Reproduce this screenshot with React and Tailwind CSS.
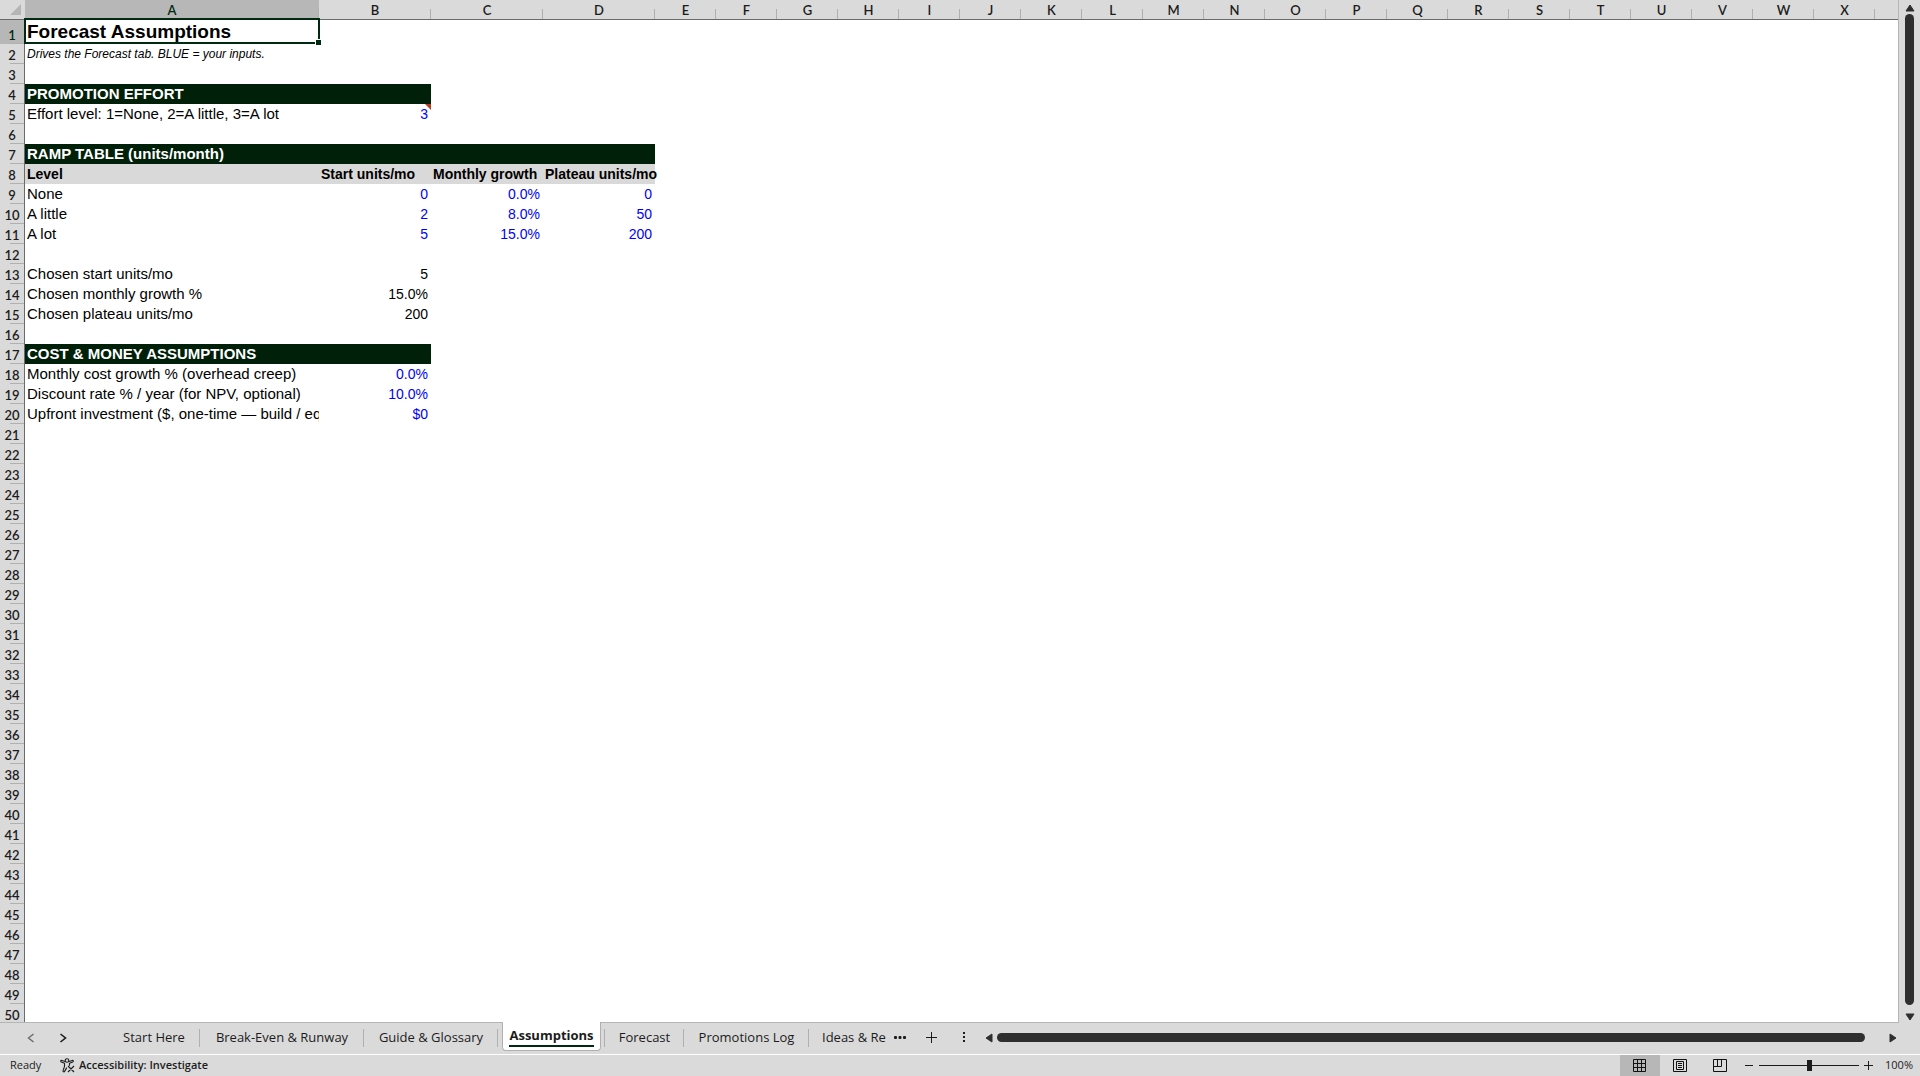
import React, { useState } from 'react';
import { clsx } from 'clsx';

const COLUMNS = 'ABCDEFGHIJKLMNOPQRSTUVWX'.split('');
const ROW_COUNT = 50;

const SECTION = 'bg-[#00200a] text-white text-[15px] font-bold';
const HEAD = 'bg-[#d9d9d9] text-[14px] font-bold';
const LABEL = 'text-[15px]';
const INPUT = 'text-[14px] text-right text-[#0000ff]';
const CALC = 'text-[14px] text-right';

const CELLS = {
  A1: { text: 'Forecast Assumptions', className: 'text-[19px] leading-6 font-bold' },
  A2: { text: 'Drives the Forecast tab. BLUE = your inputs.', className: 'text-[12px] italic' },
  A4: { text: 'PROMOTION EFFORT', className: SECTION },
  B4: { className: SECTION },
  A5: { text: 'Effort level: 1=None, 2=A little, 3=A lot', className: LABEL },
  B5: { text: '3', className: INPUT, note: true },
  A7: { text: 'RAMP TABLE (units/month)', className: SECTION },
  B7: { className: SECTION },
  C7: { className: SECTION },
  D7: { className: SECTION },
  A8: { text: 'Level', className: HEAD },
  B8: { text: 'Start units/mo', className: HEAD },
  C8: { text: 'Monthly growth', className: HEAD },
  D8: { text: 'Plateau units/mo', className: HEAD },
  A9: { text: 'None', className: LABEL },
  B9: { text: '0', className: INPUT },
  C9: { text: '0.0%', className: INPUT },
  D9: { text: '0', className: INPUT },
  A10: { text: 'A little', className: LABEL },
  B10: { text: '2', className: INPUT },
  C10: { text: '8.0%', className: INPUT },
  D10: { text: '50', className: INPUT },
  A11: { text: 'A lot', className: LABEL },
  B11: { text: '5', className: INPUT },
  C11: { text: '15.0%', className: INPUT },
  D11: { text: '200', className: INPUT },
  A13: { text: 'Chosen start units/mo', className: LABEL },
  B13: { text: '5', className: CALC },
  A14: { text: 'Chosen monthly growth %', className: LABEL },
  B14: { text: '15.0%', className: CALC },
  A15: { text: 'Chosen plateau units/mo', className: LABEL },
  B15: { text: '200', className: CALC },
  A17: { text: 'COST & MONEY ASSUMPTIONS', className: SECTION },
  B17: { className: SECTION },
  A18: { text: 'Monthly cost growth % (overhead creep)', className: LABEL },
  B18: { text: '0.0%', className: INPUT },
  A19: { text: 'Discount rate % / year (for NPV, optional)', className: LABEL },
  B19: { text: '10.0%', className: INPUT },
  A20: { text: 'Upfront investment ($, one-time — build / equ', className: 'text-[15px] overflow-hidden' },
  B20: { text: '$0', className: INPUT },
};

const TABS = [
  { name: 'Start Here', width: 'w-[92px]' },
  { name: 'Break-Even & Runway', width: 'w-[164px]' },
  { name: 'Guide & Glossary', width: 'w-[134px]' },
  { name: 'Assumptions', width: 'w-[107px]' },
  { name: 'Forecast', width: 'w-[79px]' },
  { name: 'Promotions Log', width: 'w-[125px]' },
];

function Arrow({ points }) {
  return (
    <svg width="10" height="10" viewBox="0 0 10 10">
      <polygon points={points} fill="#2e2e2e" stroke="#2e2e2e" strokeLinejoin="round" />
    </svg>
  );
}

function Cell({ id }) {
  const cell = CELLS[id];
  if (!cell) return <td />;
  return (
    <td className={clsx('py-0 pl-[2px] pr-[3px] whitespace-nowrap', (id === 'A1' || cell.note) && 'relative', cell.className)}>
      {cell.text}
      {id === 'A1' && (
        <div className="absolute -inset-x-px -top-[2px] bottom-0 border-2 border-[#012b10]">
          <span className="absolute -right-[4px] -bottom-[4px] w-[7px] h-[7px] bg-[#012b10] border border-white" />
        </div>
      )}
      {cell.note && (
        <svg className="absolute top-0 right-0" width="6" height="6" viewBox="0 0 6 6">
          <path d="M0 0h6v6z" fill="#b83b1d" />
        </svg>
      )}
    </td>
  );
}

function Sheet() {
  return (
    <main className="flex-1 min-w-0 overflow-hidden bg-white border-r border-[#b5b5b5]">
      <table className="w-full table-fixed border-separate border-spacing-0 leading-5 font-['Liberation_Sans',Arial,sans-serif] text-black">
        <colgroup>
          <col className="w-[25px]" />
          <col className="w-[294px]" />
          <col className="w-[112px]" />
          <col className="w-[112px]" />
          <col className="w-[112px]" />
          {COLUMNS.slice(4).map(c => <col key={c} className="w-[61px]" />)}
          <col />
        </colgroup>
        <thead className="font-['Lato','Noto_Sans',sans-serif] text-[13px] text-[#1c1c1c]">
          <tr className="h-5">
            <th className="bg-[#dadada] border-b border-[#6b6b6b] p-0">
              <svg className="ml-[9px]" width="13" height="12" viewBox="0 0 13 12">
                <path d="M12 0v11H1z" fill="#b5b5b5" />
              </svg>
            </th>
            {COLUMNS.map(c => (
              <th
                key={c}
                scope="col"
                className={clsx(
                  'relative p-0 pt-px h-5 leading-[18px] font-semibold border-b border-[#6b6b6b]',
                  c === 'A' ? 'bg-[#b7b7b7] text-[#012b10]' : 'bg-[#dadada]'
                )}
              >
                {c}
                <span className="absolute right-0 bottom-0 w-px h-[10px] bg-[#b0b0b0]" />
              </th>
            ))}
            <th className="bg-[#dadada] border-b border-[#6b6b6b]" />
          </tr>
        </thead>
        <tbody>
          {Array.from({ length: ROW_COUNT }, (_, i) => i + 1).map(r => (
            <tr key={r} className={r === 1 ? 'h-6' : 'h-5'}>
              <th
                scope="row"
                className={clsx(
                  "relative p-0 pt-[2px] leading-[18px] border-r border-[#6b6b6b] font-['Lato','Noto_Sans',sans-serif] text-[13px] font-semibold",
                  r === 1 ? 'bg-[#b7b7b7] text-[#012b10] align-bottom' : 'bg-[#dadada] text-[#1c1c1c]'
                )}
              >
                {r}
                <span className="absolute right-0 bottom-0 w-[14px] h-px bg-[#b0b0b0]" />
              </th>
              {COLUMNS.map(c => <Cell key={c} id={c + r} />)}
              <td />
            </tr>
          ))}
        </tbody>
      </table>
    </main>
  );
}

function VerticalScroll() {
  return (
    <aside className="w-[21px] shrink-0 flex flex-col items-center pt-[4px]">
      <button aria-label="Scroll up"><Arrow points="5,1 9,7 1,7" /></button>
      <div className="w-[9px] flex-1 mb-[7px] rounded-full bg-[#2e2e2e]" />
      <button aria-label="Scroll down"><Arrow points="1,2 9,2 5,8" /></button>
    </aside>
  );
}

function TabBar() {
  const [active, setActive] = useState('Assumptions');
  return (
    <nav className="h-8 shrink-0 flex items-stretch text-[13px] font-['Open_Sans','Noto_Sans',sans-serif] text-[#1c1c1c]">
      <div className="flex flex-1 min-w-0 border-t border-[#b5b5b5] mr-[21px] pb-[2px]">
        <button aria-label="Previous sheet" className="w-8 ml-[15px] flex items-center justify-center">
          <svg width="8" height="10" viewBox="0 0 8 10" fill="none" stroke="#6b6b6b" strokeWidth="1.4"><path d="M6.5 1 1.5 5l5 4" /></svg>
        </button>
        <button aria-label="Next sheet" className="w-8 flex items-center justify-center">
          <svg width="8" height="10" viewBox="0 0 8 10" fill="none" stroke="#1c1c1c" strokeWidth="1.6"><path d="m1.5 1 5 4-5 4" /></svg>
        </button>
        <div className="flex ml-[29px]">
          {TABS.map(tab => (
            <div key={tab.name} className={clsx('relative shrink-0 flex', tab.width)}>
              {tab.name === active ? (
                <button className="-mt-px mx-[4px] mb-px flex-1 flex items-center justify-center bg-white border border-t-0 border-[#b0b0b0] rounded-b-[4px] font-bold">
                  <span className="border-b-2 border-[#012b10] leading-5 whitespace-nowrap">{tab.name}</span>
                </button>
              ) : (
                <button onClick={() => setActive(tab.name)} className="flex-1 whitespace-nowrap font-medium">{tab.name}</button>
              )}
              <span className="absolute right-0 top-[6px] w-px h-[18px] bg-[#b0b0b0]" />
            </div>
          ))}
          <button className="w-[77px] pl-[13px] text-left font-medium whitespace-nowrap overflow-hidden">Ideas &amp; Research</button>
        </div>
        <button aria-label="More sheets" className="w-[28px] flex items-center justify-center">
          <svg width="13" height="4" viewBox="0 0 13 4" fill="#1c1c1c"><rect y="0" width="3" height="3" rx="1" /><rect x="4.5" width="3" height="3" rx="1" /><rect x="9" width="3" height="3" rx="1" /></svg>
        </button>
        <button aria-label="Add sheet" className="w-[36px] flex items-center justify-center">
          <svg width="12" height="12" viewBox="0 0 12 12" stroke="#1c1c1c"><path d="M5.5 0v11M0 5.5h11" /></svg>
        </button>
        <button aria-label="Resize tab bar" className="w-[28px] flex items-center justify-center">
          <svg width="3" height="11" viewBox="0 0 3 11" fill="#1c1c1c"><path d="M0 0h2v2H0zM0 4h2v2H0zM0 8h2v2H0z" /></svg>
        </button>
        <div className="flex flex-1 min-w-0 items-center pl-[6px]">
          <button aria-label="Scroll left"><Arrow points="2,5 8,1 8,9" /></button>
          <div className="flex-1 h-[9px] ml-[3px] mr-[24px] rounded-full bg-[#2e2e2e]" />
          <button aria-label="Scroll right"><Arrow points="1,1 7,5 1,9" /></button>
        </div>
      </div>
    </nav>
  );
}

function StatusBar() {
  const [zoom, setZoom] = useState(100);
  return (
    <footer className="h-[22px] shrink-0 flex items-center border-t border-white text-[11px] font-['Open_Sans','Noto_Sans',sans-serif] text-[#1c1c1c]">
      <span className="pl-[10px] w-[60px] font-medium">Ready</span>
      <button className="flex items-center gap-[4px] font-semibold">
        <svg width="15" height="15" viewBox="0 0 15 15" fill="none" stroke="#1c1c1c" strokeWidth="1.1" strokeLinejoin="round">
          <circle cx="7" cy="2.5" r="1.8" />
          <path d="M5.2 3.6 1.6 2.4C.6 2.2.4 3.6 1.3 4l3.2 1.3v3L3 12.8c-.2 1 1.2 1.4 1.6.6L6.8 9.6M8.8 3.6l3.6-1.2c1-.2 1.2 1.2.3 1.6L9.5 5.3v2.4M8 8l6 6M14 8l-6 6" />
        </svg>
        Accessibility: Investigate
      </button>
      <div className="ml-auto h-full flex items-center">
        <button aria-label="Normal view" className="w-[40px] h-full flex items-center justify-center bg-[#b7b7b7]">
          <svg width="14" height="14" viewBox="0 0 14 14" fill="none" stroke="#111"><path d="M.5.5h12v12H.5zM4.5.5v12M8.500.5v12M.5 4.500h12M.5 8.500h12" /></svg>
        </button>
        <button aria-label="Page layout view" className="w-[40px] h-full flex items-center justify-center">
          <svg width="14" height="14" viewBox="0 0 14 14" fill="none" stroke="#111"><path d="M.5.5h13v12H.5zM3.500 2.500h7v8h-7zM5 4.500h4M5 6.500h4M5 8.500h4" /></svg>
        </button>
        <button aria-label="Page break view" className="w-[40px] h-full flex items-center justify-center">
          <svg width="14" height="14" viewBox="0 0 14 14" fill="none" stroke="#111"><path d="M.5.5h13v12H.5zM.5 7.500h8V.5M4.500.5v7" /></svg>
        </button>
        <button aria-label="Zoom out" className="w-[19px] flex justify-center">
          <svg width="9" height="9" viewBox="0 0 9 9" stroke="#1c1c1c"><path d="M0 4.500h8" /></svg>
        </button>
        <input
          type="range"
          aria-label="Zoom"
          min="0"
          max="200"
          value={zoom}
          onChange={e => setZoom(Number(e.target.value))}
          className="w-[100px] h-[11px] appearance-none bg-[linear-gradient(#1c1c1c,#1c1c1c)] bg-[length:100%_1px] bg-center bg-no-repeat [&::-webkit-slider-thumb]:appearance-none [&::-webkit-slider-thumb]:w-[5px] [&::-webkit-slider-thumb]:h-[11px] [&::-webkit-slider-thumb]:bg-[#1c1c1c]"
        />
        <button aria-label="Zoom in" className="w-[18px] flex justify-center">
          <svg width="9" height="9" viewBox="0 0 9 9" stroke="#1c1c1c"><path d="M0 4.500h9M4.500 0v9" /></svg>
        </button>
        <span className="w-[43px] pl-[8px] font-medium">{zoom}%</span>
      </div>
    </footer>
  );
}

export default function App() {
  return (
    <div className="h-screen flex flex-col overflow-hidden bg-[#dadada]">
      <div className="flex flex-1 min-h-0">
        <Sheet />
        <VerticalScroll />
      </div>
      <TabBar />
      <StatusBar />
    </div>
  );
}
